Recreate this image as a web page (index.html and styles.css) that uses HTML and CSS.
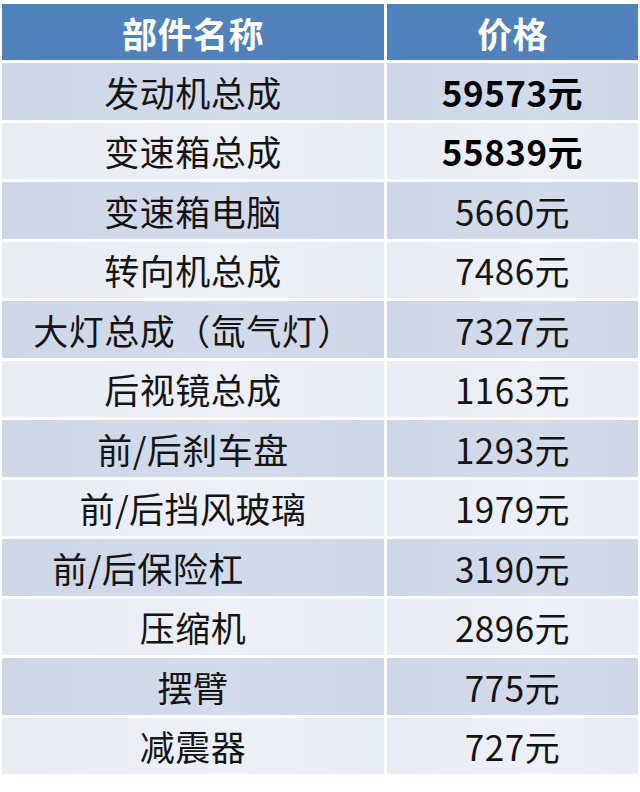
FILE: index.html
```html
<!DOCTYPE html>
<html lang="zh-CN">
<head>
<meta charset="utf-8">
<title>部件价格</title>
<link rel="stylesheet" href="styles.css">
</head>
<body>
<div class="table">
  <div class="cell head">部件名称</div><div class="cell head">价格</div>
  <div class="cell odd">发动机总成</div><div class="cell odd strong">59573元</div>
  <div class="cell even">变速箱总成</div><div class="cell even strong">55839元</div>
  <div class="cell odd">变速箱电脑</div><div class="cell odd">5660元</div>
  <div class="cell even">转向机总成</div><div class="cell even">7486元</div>
  <div class="cell odd">大灯总成（氙气灯）</div><div class="cell odd">7327元</div>
  <div class="cell even">后视镜总成</div><div class="cell even">1163元</div>
  <div class="cell odd">前/后刹车盘</div><div class="cell odd">1293元</div>
  <div class="cell even">前/后挡风玻璃</div><div class="cell even">1979元</div>
  <div class="cell odd shift">前/后保险杠</div><div class="cell odd">3190元</div>
  <div class="cell even">压缩机</div><div class="cell even">2896元</div>
  <div class="cell odd">摆臂</div><div class="cell odd">775元</div>
  <div class="cell even">减震器</div><div class="cell even">727元</div>
</div>
</body>
</html>
```
FILE: styles.css
```css
html, body {
  margin: 0;
  padding: 0;
  background: #ffffff;
}
body {
  padding: 4px 3px 0 2px;
  font-family: "Noto Sans CJK SC", "Noto Sans", sans-serif;
}
.table {
  display: grid;
  grid-template-columns: 382px 251px;
  grid-template-rows: 56px repeat(12, 56.5px);
  gap: 3px;
  width: 636px;
}
.cell {
  display: flex;
  align-items: center;
  justify-content: center;
  font-size: 35px;
  line-height: 1;
  color: #141414;
  letter-spacing: 0.5px;
}
.head {
  background: #4f81bd;
  color: #ffffff;
  font-weight: 700;
}
.odd {
  background: linear-gradient(90deg, #cfd7e7 0%, #d3dae9 60%, #cfd7e6 100%);
}
.even {
  background: linear-gradient(90deg, #e8ecf3 0%, #edf0f6 60%, #e8ecf3 100%);
}
.strong {
  font-weight: 700;
  color: #000000;
}
.shift {
  padding-right: 90px;
}
```
